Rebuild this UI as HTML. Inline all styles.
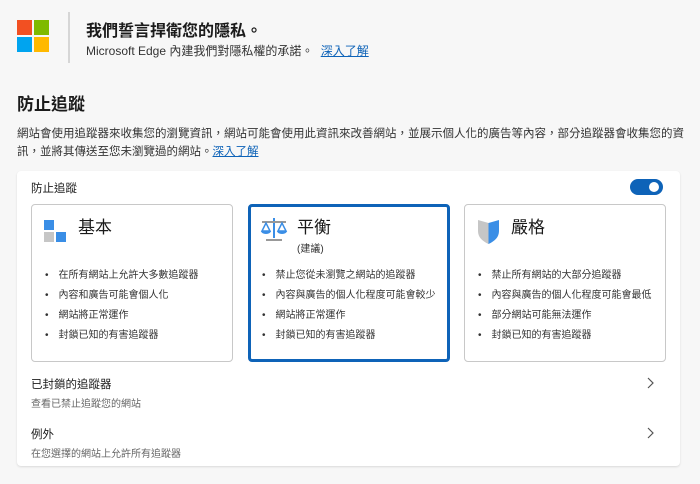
<!DOCTYPE html>
<html><head><meta charset="utf-8"><style>
*{margin:0;padding:0;box-sizing:border-box}
body{width:700px;height:484px;background:#f7f7f7;font-family:"Liberation Sans","Noto Sans CJK TC",sans-serif;color:#1b1b1b;position:relative;overflow:hidden}
.a{position:absolute}
.lk{color:#0e63b8;text-decoration:underline}
.card{position:absolute;top:204px;width:202px;height:158px;background:#fff;border:1px solid #c8c8c8;border-radius:4px}
.card.sel{border:3px solid #0e63b8}
.card h3{position:absolute;top:12px;left:46px;font-size:17px;font-weight:normal;line-height:22px}
.card ul{position:absolute;top:64px;left:13px;list-style:none;font-size:10px;color:#333}
.card li{height:20px;line-height:14px}
.card li:before{content:"•";margin-right:10px}
.sel ul{top:62px;left:11px}
</style></head><body>
<div class="a" style="left:17px;top:20px;width:15px;height:15px;background:#f25022"></div>
<div class="a" style="left:34px;top:20px;width:15px;height:15px;background:#7fba00"></div>
<div class="a" style="left:17px;top:37px;width:15px;height:15px;background:#00a4ef"></div>
<div class="a" style="left:34px;top:37px;width:15px;height:15px;background:#ffb900"></div>
<div class="a" style="left:68px;top:12px;width:2px;height:51px;background:#d6d6d6"></div>
<div class="a" style="left:86px;top:17px;font-size:16px;font-weight:bold">我們誓言捍衛您的隱私。</div>
<div class="a" style="left:86px;top:42px;font-size:12px;color:#333">Microsoft Edge 內建我們對隱私權的承諾。 <span class="lk" style="margin-left:4px">深入了解</span></div>
<div class="a" style="left:17px;top:90px;font-size:17px;font-weight:bold">防止追蹤</div>
<div class="a" style="left:17px;top:125px;width:670px;font-size:11.5px;line-height:18px;color:#333">網站會使用追蹤器來收集您的瀏覽資訊，網站可能會使用此資訊來改善網站，並展示個人化的廣告等內容，部分追蹤器會收集您的資訊，並將其傳送至您未瀏覽過的網站。<span class="lk">深入了解</span></div>
<div class="a" style="left:17px;top:171px;width:663px;height:295px;background:#fff;border-radius:4px;box-shadow:0 1px 2px rgba(0,0,0,.12)"></div>
<div class="a" style="left:31px;top:180px;font-size:11.5px">防止追蹤</div>
<div class="a" style="left:630px;top:179px;width:33px;height:16px;border-radius:8px;background:#0e63b8"><div class="a" style="left:19px;top:3px;width:10px;height:10px;border-radius:5px;background:#fff"></div></div>
<div class="card" style="left:31px">
<div class="a" style="left:12px;top:15px;width:10px;height:10px;background:#3a8ee6"></div>
<div class="a" style="left:12px;top:27px;width:10px;height:10px;background:#c6c6c6"></div>
<div class="a" style="left:24px;top:27px;width:10px;height:10px;background:#3a8ee6"></div>
<h3>基本</h3>
<ul><li>在所有網站上允許大多數追蹤器</li><li>內容和廣告可能會個人化</li><li>網站將正常運作</li><li>封鎖已知的有害追蹤器</li></ul></div>
<div class="card sel" style="left:248px">
<svg class="a" style="left:9px;top:10px" width="28" height="26" viewBox="0 0 28 26"><rect x="13" y="1" width="2" height="20" fill="#3a8ee6"/><rect x="2" y="4" width="24" height="2" fill="#999"/><path d="M6 6 L2 14 H10 Z M22 6 L18 14 H26 Z" fill="none" stroke="#3a8ee6" stroke-width="1.5"/><path d="M1 14h10a5 3 0 0 1-10 0zM17 14h10a5 3 0 0 1-10 0z" fill="#3a8ee6"/><rect x="6" y="22" width="16" height="2" fill="#999"/></svg>
<h3 style="top:10px">平衡</h3>
<div class="a" style="left:46px;top:33px;font-size:10px;color:#333">(建議)</div>
<ul><li>禁止您從未瀏覽之網站的追蹤器</li><li>內容與廣告的個人化程度可能會較少</li><li>網站將正常運作</li><li>封鎖已知的有害追蹤器</li></ul></div>
<div class="card" style="left:464px">
<svg class="a" style="left:12px;top:13px" width="23" height="27" viewBox="0 0 23 27"><path d="M1 2 L11.5 5 V26 C5 23 1 19 1 13 Z" fill="#c6c6c6"/><path d="M22 2 L11.5 5 V26 C18 23 22 19 22 13 Z" fill="#3a8ee6"/></svg>
<h3>嚴格</h3>
<ul><li>禁止所有網站的大部分追蹤器</li><li>內容與廣告的個人化程度可能會最低</li><li>部分網站可能無法運作</li><li>封鎖已知的有害追蹤器</li></ul></div>
<div class="a" style="left:31px;top:376px;font-size:11.5px">已封鎖的追蹤器</div>
<div class="a" style="left:31px;top:395px;font-size:10px;color:#666">查看已禁止追蹤您的網站</div>
<div class="a" style="left:31px;top:426px;font-size:11.5px">例外</div>
<div class="a" style="left:31px;top:445px;font-size:10px;color:#666">在您選擇的網站上允許所有追蹤器</div>
<svg class="a" style="left:647px;top:377px" width="8" height="12"><path d="M1 1l5 5-5 5" fill="none" stroke="#555" stroke-width="1.2"/></svg>
<svg class="a" style="left:647px;top:427px" width="8" height="12"><path d="M1 1l5 5-5 5" fill="none" stroke="#555" stroke-width="1.2"/></svg>
</body></html>
